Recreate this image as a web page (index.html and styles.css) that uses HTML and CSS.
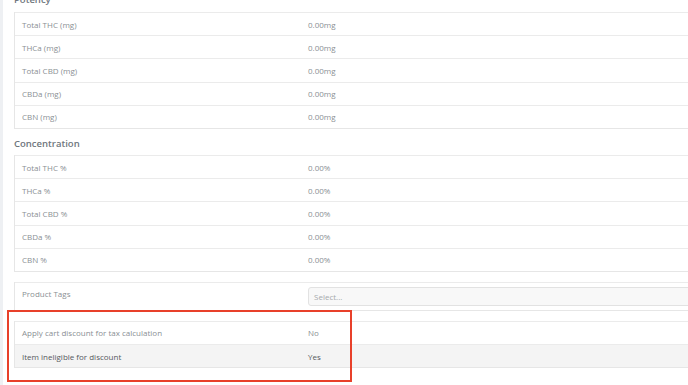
FILE: index.html
```html
<!DOCTYPE html>
<html>
<head>
<meta charset="utf-8">
<link rel="stylesheet" href="styles.css">
</head>
<body>
<div class="page">
  <div class="rail"></div>
  <div class="content">
    <h3 class="heading first">Potency</h3>
    <div class="table">
      <div class="row"><span class="label">Total THC (mg)</span><span class="value">0.00mg</span></div>
      <div class="row"><span class="label">THCa (mg)</span><span class="value">0.00mg</span></div>
      <div class="row"><span class="label">Total CBD (mg)</span><span class="value">0.00mg</span></div>
      <div class="row"><span class="label">CBDa (mg)</span><span class="value">0.00mg</span></div>
      <div class="row"><span class="label">CBN (mg)</span><span class="value">0.00mg</span></div>
    </div>
    <h3 class="heading">Concentration</h3>
    <div class="table">
      <div class="row"><span class="label">Total THC %</span><span class="value">0.00%</span></div>
      <div class="row"><span class="label">THCa %</span><span class="value">0.00%</span></div>
      <div class="row"><span class="label">Total CBD %</span><span class="value">0.00%</span></div>
      <div class="row"><span class="label">CBDa %</span><span class="value">0.00%</span></div>
      <div class="row"><span class="label">CBN %</span><span class="value">0.00%</span></div>
    </div>
    <div class="table tags">
      <div class="row tags-row"><span class="label">Product Tags</span><span class="value"><span class="select">Select...</span></span></div>
    </div>
    <div class="table discount">
      <div class="row"><span class="label">Apply cart discount for tax calculation</span><span class="value">No</span></div>
      <div class="row shaded"><span class="label dark">Item ineligible for discount</span><span class="value dark">Yes</span></div>
    </div>
    <div class="highlight"></div>
  </div>
</div>
</body>
</html>
```

FILE: styles.css
```css
html, body {
  margin: 0;
  padding: 0;
  background: #ffffff;
  overflow: hidden;
}
body {
  font-family: "Open Sans", "Noto Sans", sans-serif;
  width: 688px;
  height: 385px;
}
.page {
  display: flex;
  height: 385px;
}
.rail {
  width: 3px;
  flex: none;
  background: #eef0f3;
}
.content {
  position: relative;
  flex: none;
  width: 760px;
  padding-left: 11px;
  margin-top: -9px;
}
.heading {
  margin: 0;
  font-size: 9.5px;
  font-weight: 600;
  color: #6f767d;
  height: 24px;
  padding-top: 2px;
  line-height: 26px;
}
.heading.first {
  height: 21px;
  padding-top: 0;
  line-height: 18px;
}
.table {
  border: 1px solid #e6e6e6;
  border-top: none;
}
.row {
  display: grid;
  grid-template-columns: 285px 1fr;
  height: 22.2px;
  border-top: 1px solid #ebebeb;
  align-items: center;
  font-size: 8px;
  color: #8a8f94;
}
.label {
  padding-left: 7px;
}
.value {
  padding-left: 8px;
}
.dark {
  color: #55595d;
}
.shaded {
  background: #f4f4f4;
}
.tags {
  margin-top: 10px;
}
.tags-row {
  height: 27px;
  align-items: start;
}
.tags-row .label {
  padding-top: 5px;
}
.tags-row .value {
  padding-top: 4px;
}
.select {
  display: block;
  height: 17px;
  line-height: 17px;
  border: 1px solid #e2e2e2;
  border-radius: 3px;
  background: #f8f8f8;
  padding-left: 5px;
  color: #a6a9ac;
}
.discount {
  margin-top: 10px;
}
.highlight {
  position: absolute;
  left: 4px;
  top: 319px;
  width: 341px;
  height: 68px;
  border: 2px solid #e8402a;
}
```
